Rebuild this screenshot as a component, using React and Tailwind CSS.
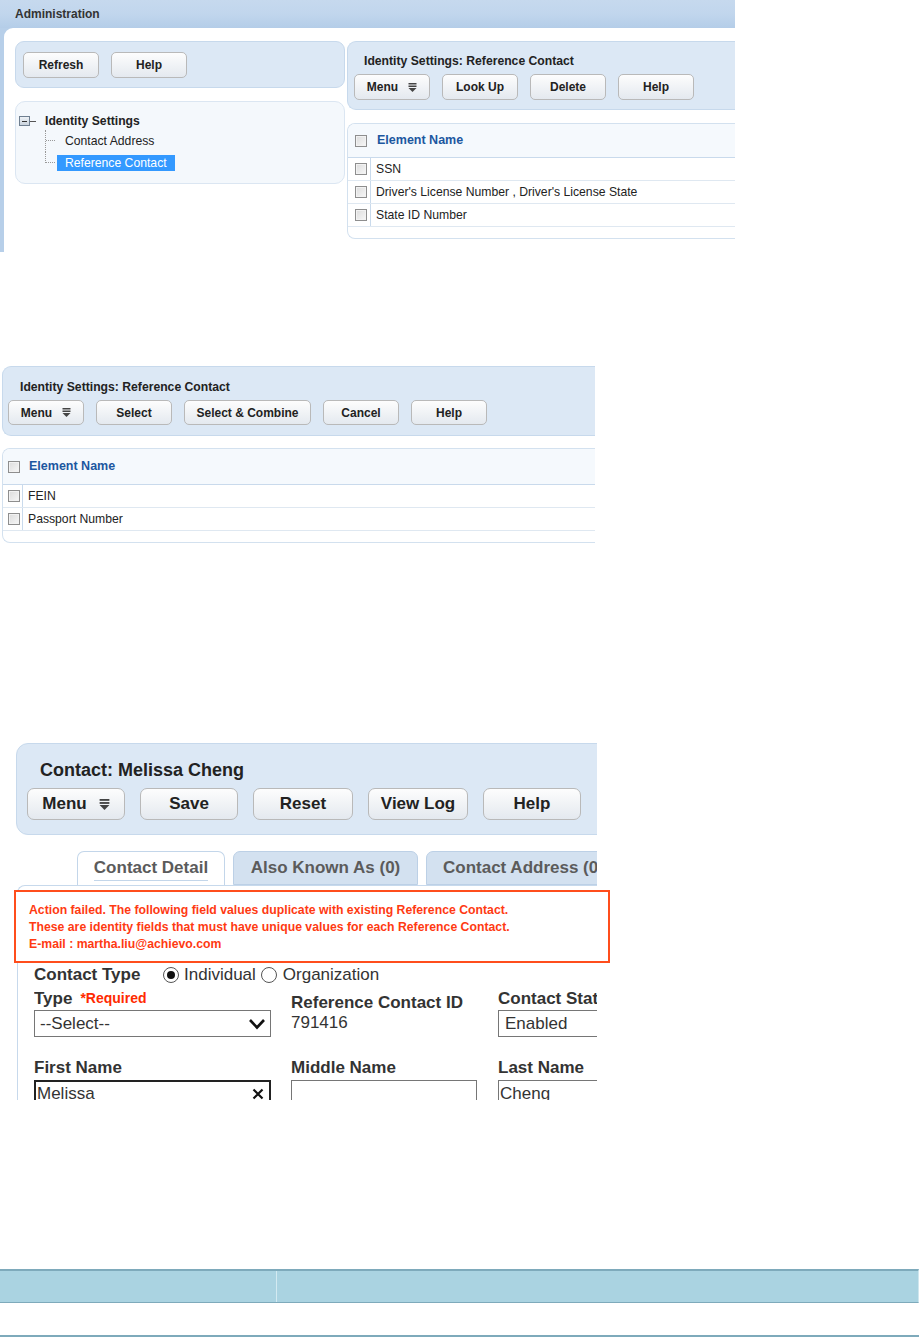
import React from 'react';

const font = { fontFamily: '"Liberation Sans", Arial, sans-serif' };

function MenuIcon({ size = 9 }) {
  return (
    <svg width={size} height={size} viewBox="0 0 9 9" className="inline-block">
      <rect x="0.5" y="0" width="8" height="1.5" fill="#444" />
      <rect x="0.5" y="2.5" width="8" height="1.5" fill="#444" />
      <polygon points="0.5,5 8.5,5 4.5,9" fill="#444" />
    </svg>
  );
}

function Btn({ children, className = '' }) {
  return (
    <button
      type="button"
      className={
        'flex shrink-0 items-center justify-center rounded-[5px] border border-[#b9b9b9] bg-gradient-to-b from-[#fdfdfd] to-[#e4e9ef] font-bold text-[#222] whitespace-nowrap ' +
        className
      }
    >
      {children}
    </button>
  );
}

function Check() {
  return (
    <span className="block w-[12px] h-[12px] border border-[#8e8e8e] bg-gradient-to-br from-[#dcdcdc] to-[#f7f7f7] shadow-[inset_0_0_0_1px_#f2f2f2]" />
  );
}

function ElementTable({ rows, className, headH, checkLeft, colW }) {
  return (
    <div className={'bg-white border border-[#d3e1ef] rounded-l-[8px] overflow-hidden ' + className}>
      <div
        className="flex items-center bg-[#f5f9fd] border-b border-[#c9daec]"
        style={{ height: headH }}
      >
        <div className="flex items-center" style={{ width: colW, paddingLeft: checkLeft }}>
          <Check />
        </div>
        <span className="pl-[6px] font-bold text-[12.5px] text-[#1c57a0]">Element Name</span>
      </div>
      {rows.map((r) => (
        <div key={r} className="flex h-[23px] border-b border-[#dfe8f1]">
          <div
            className="flex items-center border-r border-[#c9daec]"
            style={{ width: colW, paddingLeft: checkLeft }}
          >
            <Check />
          </div>
          <span className="pl-[5px] flex items-center text-[12.2px] text-[#222]">{r}</span>
        </div>
      ))}
    </div>
  );
}

function AdminShot() {
  return (
    <div className="w-[735px] h-[252px] bg-[#b7cfe9] overflow-hidden">
      <div className="h-[28px] bg-gradient-to-b from-[#c6d9ee] via-[#c1d6ed] to-[#b4cde8] flex items-center pl-[15px] font-bold text-[12px] text-[#333]">
        Administration
      </div>
      <div className="ml-[4px] h-[224px] bg-white rounded-tl-[9px] flex pt-[13px] pl-[11px] gap-[2px]">
        <div className="w-[330px] shrink-0">
          <div className="h-[47px] rounded-[9px] bg-[#dce8f5] border border-[#c7d9ec] flex items-center pl-[7px] gap-[12px]">
            <Btn className="w-[76px] h-[26px] text-[12px]">Refresh</Btn>
            <Btn className="w-[76px] h-[26px] text-[12px]">Help</Btn>
          </div>
          <div className="mt-[13px] h-[83px] rounded-[10px] bg-[#f4f8fc] border border-[#dbe6f2] pl-[3px] pt-[10px] text-[12.2px] text-[#222]">
            <div className="flex items-center h-[18px]">
              <span className="w-[11px] h-[10px] border border-[#6f7f90] bg-gradient-to-b from-[#eef2f6] to-[#c9d3dd] flex items-center justify-center">
                <span className="block w-[5px] h-[1px] bg-[#333]" />
              </span>
              <span className="block w-[6px] h-[1px] bg-[#555]" />
              <span className="ml-[9px] font-bold">Identity Settings</span>
            </div>
            <div className="ml-[26px]">
              <div className="flex h-[22px]">
                <span className="w-[10px] border-l border-dotted border-[#999]">
                  <span className="block h-[11px] border-b border-dotted border-[#999]" />
                </span>
                <span className="ml-[2px] px-[8px] flex items-center">Contact Address</span>
              </div>
              <div className="flex h-[22px]">
                <span className="w-[10px] h-[11px] border-l border-b border-dotted border-[#999]" />
                <span className="ml-[2px] px-[8px] h-[16px] mt-[3px] flex items-center bg-[#3399ff] text-white">
                  Reference Contact
                </span>
              </div>
            </div>
          </div>
        </div>
        <div className="flex-1">
          <div className="h-[69px] rounded-l-[9px] bg-[#dce8f5] border border-r-0 border-[#c7d9ec] pl-[6px]">
            <div className="pl-[10px] pt-[10px] h-[32px] font-bold text-[12.2px] text-[#222]">
              Identity Settings: Reference Contact
            </div>
            <div className="flex gap-[12px]">
              <Btn className="w-[76px] h-[26px] text-[12px] gap-[10px]">
                Menu <MenuIcon />
              </Btn>
              <Btn className="w-[76px] h-[26px] text-[12px]">Look Up</Btn>
              <Btn className="w-[76px] h-[26px] text-[12px]">Delete</Btn>
              <Btn className="w-[76px] h-[26px] text-[12px]">Help</Btn>
            </div>
          </div>
          <ElementTable
            className="mt-[13px] h-[116px] border-r-0"
            rows={['SSN', "Driver's License Number , Driver's License State", 'State ID Number']}
            headH={34}
            checkLeft={7}
            colW={23}
          />
        </div>
      </div>
    </div>
  );
}

function LookupShot() {
  return (
    <div className="w-[593px] ml-[2px] mt-[114px]">
      <div className="h-[70px] rounded-l-[9px] bg-[#dce8f5] border border-r-0 border-[#c7d9ec] pl-[5px]">
        <div className="pl-[12px] pt-[11px] h-[33px] font-bold text-[12.2px] text-[#222]">
          Identity Settings: Reference Contact
        </div>
        <div className="flex gap-[12px]">
          <Btn className="w-[76px] h-[25px] text-[12px] gap-[10px]">
            Menu <MenuIcon />
          </Btn>
          <Btn className="w-[76px] h-[25px] text-[12px]">Select</Btn>
          <Btn className="w-[127px] h-[25px] text-[12px]">Select &amp; Combine</Btn>
          <Btn className="w-[76px] h-[25px] text-[12px]">Cancel</Btn>
          <Btn className="w-[76px] h-[25px] text-[12px]">Help</Btn>
        </div>
      </div>
      <ElementTable
        className="mt-[12px] h-[95px] border-r-0"
        rows={['FEIN', 'Passport Number']}
        headH={36}
        checkLeft={5}
        colW={20}
      />
    </div>
  );
}

function Radio({ checked }) {
  return (
    <span className="w-[16px] h-[16px] rounded-full border border-[#555] bg-white flex items-center justify-center">
      {checked && <span className="block w-[8px] h-[8px] rounded-full bg-[#111]" />}
    </span>
  );
}

function ContactShot() {
  return (
    <div className="mt-[200px] ml-[14px] w-[596px] h-[357px] overflow-hidden text-[#333]">
      <div className="w-[583px] overflow-hidden">
        <div className="ml-[2px] w-[600px] h-[92px] rounded-[12px] bg-[#dce8f5] border border-[#c7d9ec] pl-[10px]">
          <div className="pl-[13px] pt-[13px] h-[44px] font-bold text-[18px] text-[#222]">
            Contact: Melissa Cheng
          </div>
          <div className="flex gap-[15px]">
            <Btn className="w-[98px] h-[32px] text-[17px] gap-[12px] rounded-[7px]">
              Menu <MenuIcon size={11} />
            </Btn>
            <Btn className="w-[98px] h-[32px] text-[17px] rounded-[7px]">Save</Btn>
            <Btn className="w-[100px] h-[32px] text-[17px] rounded-[7px]">Reset</Btn>
            <Btn className="w-[100px] h-[32px] text-[17px] rounded-[7px]">View Log</Btn>
            <Btn className="w-[98px] h-[32px] text-[17px] rounded-[7px]">Help</Btn>
          </div>
        </div>
        <div className="mt-[16px] flex items-end pl-[63px] gap-[8px] h-[34px] font-bold text-[17px] text-[#5b5b5b] whitespace-nowrap">
          <div className="w-[148px] shrink-0 h-[34px] bg-white border border-b-0 border-[#c3d6ea] rounded-t-[7px] flex items-center justify-center">
            <span className="border-b border-[#c3d6ea] leading-[24px]">Contact Detail</span>
          </div>
          <div className="w-[185px] shrink-0 h-[34px] bg-[#d3e1f0] border border-[#bcd0e6] rounded-t-[7px] flex items-center justify-center">
            Also Known As (0)
          </div>
          <div className="w-[240px] shrink-0 h-[34px] bg-[#d3e1f0] border border-[#bcd0e6] rounded-t-[7px] flex items-center pl-[16px]">
            Contact Address (0)
          </div>
        </div>
      </div>
      <div className="relative">
        <div className="ml-[3px] w-[580px] h-[240px] border-l border-t border-[#c7d9ec] rounded-tl-[8px]" />
        <div className="absolute left-0 top-[5px] w-[596px] h-[73px] border-2 border-[#ff4d1c] bg-white pl-[13px] pt-[10px] font-bold text-[12.25px] leading-[17px] text-[#ff3a12]">
          <div>Action failed. The following field values duplicate with existing Reference Contact.</div>
          <div>These are identity fields that must have unique values for each Reference Contact.</div>
          <div>E-mail : martha.liu@achievo.com</div>
        </div>
        <div className="absolute left-[20px] top-[80px] w-[563px] overflow-hidden text-[17px]">
          <div className="flex items-center h-[22px] mt-[-1px]">
            <span className="font-bold w-[129px]">Contact Type</span>
            <Radio checked />
            <span className="ml-[5px]">Individual</span>
            <span className="ml-[5px]"><Radio /></span>
            <span className="ml-[6px]">Organization</span>
          </div>
          <div className="flex mt-[2px]">
            <div className="w-[257px] shrink-0">
              <div className="h-[21px] flex items-center font-bold">
                Type <span className="ml-[8px] text-[14px] text-[#ff2a00] font-bold">*Required</span>
              </div>
              <div className="w-[237px] h-[27px] mt-[1px] border border-[#767676] flex items-center justify-between pl-[5px] pr-[4px] bg-white">
                <span>--Select--</span>
                <svg width="18" height="12" viewBox="0 0 18 12">
                  <polyline points="2,2 9,9.5 16,2" fill="none" stroke="#111" strokeWidth="2.6" />
                </svg>
              </div>
            </div>
            <div className="w-[207px] shrink-0 pt-[5px]">
              <div className="font-bold leading-[20px]">Reference Contact ID</div>
              <div className="leading-[20px]">791416</div>
            </div>
            <div className="shrink-0">
              <div className="h-[21px] flex items-center font-bold whitespace-nowrap">Contact Status</div>
              <div className="w-[120px] h-[27px] mt-[1px] border border-[#767676] flex items-center pl-[6px] bg-white">
                Enabled
              </div>
            </div>
          </div>
          <div className="flex mt-[20px]">
            <div className="w-[257px] shrink-0">
              <div className="h-[21px] flex items-center font-bold">First Name</div>
              <div className="w-[237px] h-[28px] mt-[2px] border-2 border-[#222] flex items-center justify-between pl-[1px] pr-[5px] bg-white">
                <span>Melissa</span>
                <svg width="12" height="12" viewBox="0 0 12 12">
                  <path d="M1.5 1.5 L10.5 10.5 M10.5 1.5 L1.5 10.5" stroke="#111" strokeWidth="2.2" />
                </svg>
              </div>
            </div>
            <div className="w-[207px] shrink-0">
              <div className="h-[21px] flex items-center font-bold">Middle Name</div>
              <div className="w-[186px] h-[28px] mt-[2px] border border-[#767676] bg-white" />
            </div>
            <div className="shrink-0">
              <div className="h-[21px] flex items-center font-bold">Last Name</div>
              <div className="w-[120px] h-[28px] mt-[2px] border border-[#767676] flex items-center pl-[1px] bg-white">
                Cheng
              </div>
            </div>
          </div>
        </div>
      </div>
    </div>
  );
}

function BottomTable() {
  return (
    <div className="mt-[169px] w-[919px]">
      <div className="flex h-[34px] bg-[#aad3e1] border-t-2 border-b border-[#7eaabb] border-r border-r-[#cfe6ee]">
        <div className="w-[277px] border-r border-[#d3eaf1]" />
        <div className="flex-1" />
      </div>
      <div className="flex h-[34px] bg-white border-b-2 border-[#7eaabb]">
        <div className="w-[277px]" />
        <div className="flex-1" />
      </div>
    </div>
  );
}

export default function App() {
  return (
    <div className="w-[920px] h-[1338px] bg-white overflow-hidden" style={font}>
      <AdminShot />
      <LookupShot />
      <ContactShot />
      <BottomTable />
    </div>
  );
}
